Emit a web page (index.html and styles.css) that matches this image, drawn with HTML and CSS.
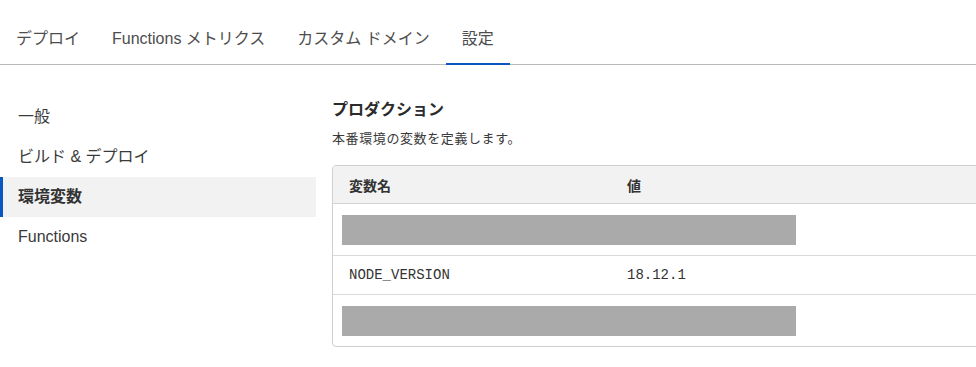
FILE: index.html
```html
<!DOCTYPE html>
<html lang="ja">
<head>
  <meta charset="UTF-8">
  <meta name="viewport" content="width=device-width, initial-scale=1.0">
  <title>設定 - 環境変数</title>
  <link rel="stylesheet" href="styles.css">
</head>
<body>
  <nav class="tabs">
    <a class="tab">デプロイ</a>
    <a class="tab">Functions メトリクス</a>
    <a class="tab">カスタム ドメイン</a>
    <a class="tab active">設定</a>
  </nav>

  <div class="layout">
    <!-- Settings sidebar -->
    <ul class="side-menu">
      <li class="side-item">一般</li>
      <li class="side-item">ビルド &amp; デプロイ</li>
      <li class="side-item active">環境変数</li>
      <li class="side-item">Functions</li>
    </ul>

    <main class="content">
      <h2 class="section-title">プロダクション</h2>
      <p class="section-desc">本番環境の変数を定義します。</p>

      <div class="env-table">
        <div class="env-row env-head">
          <div class="cell name">変数名</div>
          <div class="cell value">値</div>
        </div>
        <div class="env-row masked">
          <div class="redacted"></div>
        </div>
        <div class="env-row">
          <div class="cell name mono">NODE_VERSION</div>
          <div class="cell value mono">18.12.1</div>
        </div>
        <div class="env-row masked">
          <div class="redacted"></div>
        </div>
      </div>
    </main>
  </div>
</body>
</html>
```

FILE: styles.css
```css
body {
  margin: 0;
  background-color: #fff;
  color: #333;
  font-family: "Liberation Sans", "Noto Sans CJK JP", sans-serif;
  overflow: hidden;
}

/* Top tabs */
.tabs {
  display: flex;
  padding-top: 15px;
  border-bottom: 1px solid #b8b8b8;
}

.tab {
  box-sizing: border-box;
  height: 50px;
  line-height: 48px;
  padding: 0 16px;
  margin-bottom: -1px;
  font-size: 16px;
  color: #4d4d4d;
  border-bottom: 2px solid transparent;
  cursor: pointer;
}

.tab.active {
  border-bottom-color: #0a57c2;
}

/* Sidebar + content */
.layout {
  display: flex;
  gap: 16px;
  padding-top: 32px;
}

.side-menu {
  list-style: none;
  margin: 0;
  padding: 0;
  width: 316px;
  flex-shrink: 0;
}

.side-item {
  height: 40px;
  line-height: 40px;
  padding-left: 15px;
  border-left: 3px solid transparent;
  font-size: 16px;
  color: #3a3a3a;
}

.side-item.active {
  background-color: #f2f2f2;
  border-left-color: #0a57c2;
  font-weight: bold;
  color: #333;
}

.content {
  flex-shrink: 0;
}

.section-title {
  margin: 0;
  padding-top: 1px;
  font-size: 16px;
  line-height: 24px;
  font-weight: bold;
  color: #2b2b2b;
}

.section-desc {
  margin: 7px 0 16px;
  font-size: 13px;
  line-height: 20px;
  letter-spacing: 0.6px;
  color: #3a3a3a;
}

/* Variables table */
.env-table {
  width: 700px;
  border: 1px solid #cfcfcf;
  border-radius: 4px;
  overflow: hidden;
}

.env-row {
  display: flex;
  align-items: center;
  height: 38px;
  border-top: 1px solid #d9d9d9;
}

.env-row:first-child {
  border-top: none;
}

.env-head {
  height: 37px;
  background-color: #f2f2f2;
  border-bottom: 1px solid #d4d4d4;
  font-size: 14px;
  font-weight: bold;
  color: #333;
}

.env-head + .env-row {
  border-top: none;
}

.cell {
  box-sizing: border-box;
  padding: 0 16px;
}

.cell.name {
  width: 278px;
}

.mono {
  font-family: "Liberation Mono", "DejaVu Sans Mono", monospace;
  font-size: 14px;
  color: #333;
}

.env-row.masked {
  height: 51px;
  padding-left: 9px;
}

.redacted {
  width: 454px;
  height: 30px;
  background-color: #aaa;
}
```
